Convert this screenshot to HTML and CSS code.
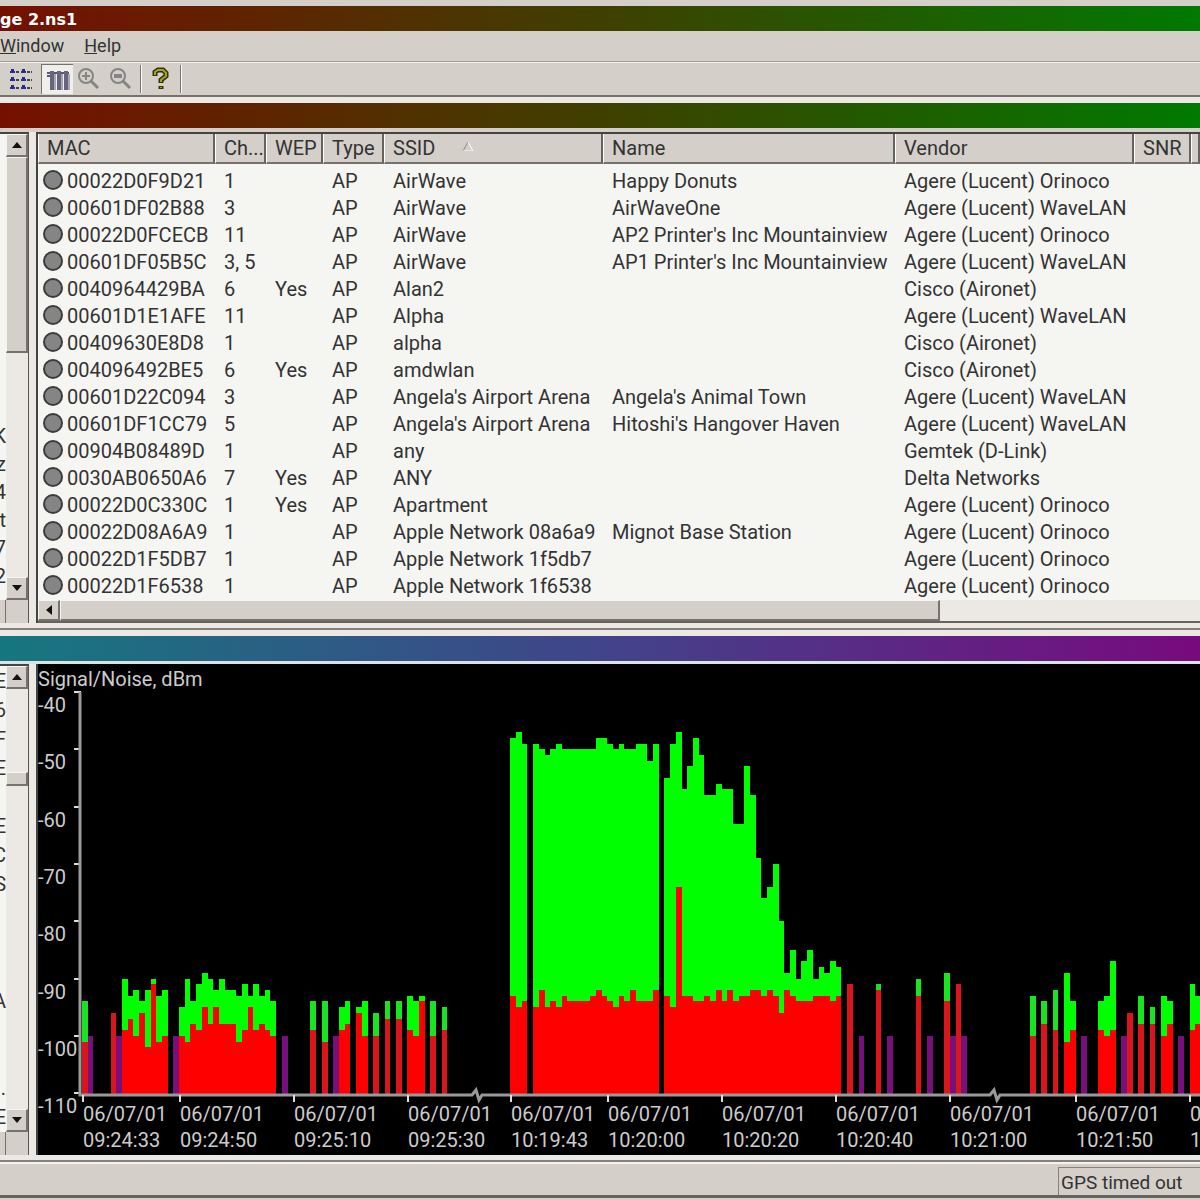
FILE: index.html
```html
<!DOCTYPE html>
<html lang="en">
<head>
    <meta charset="UTF-8">
    <meta name="viewport" content="width=device-width, initial-scale=1.0">
    <title>Network Stumbler</title>
    <link rel="stylesheet" href="styles.css">
</head>
<body>
    <header class="title-bar"><h1>ge 2.ns1</h1></header>

    <nav class="menu">
        <button><u>W</u>indow</button>
        <button><u>H</u>elp</button>
    </nav>

    <div class="toolbar">
        <button class="tool" aria-label="List">
            <svg width="24" height="24" viewBox="0 0 24 24">
                <g fill="#2a2a8c">
                    <path d="M2 2h3v2h1v2H1V4h1zM13 2h3v2h1v2h-5V4h1zM2 10h3v2h1v2H1v-2h1zM13 10h3v2h1v2h-5v-2h1zM2 18h3v2h1v2H1v-2h1zM13 18h3v2h1v2h-5v-2h1z"/>
                </g>
                <path d="M7 5h4M18 5h5M7 13h4M18 13h5M7 21h4M18 21h5" stroke="#444" stroke-width="2" stroke-dasharray="3 1"/>
            </svg>
        </button>
        <button class="tool pressed" aria-label="Details">
            <svg width="24" height="24" viewBox="0 0 24 24">
                <path d="M1 5h22M1 8h5" stroke="#555580" stroke-width="2"/>
                <path d="M6 3v19M13 3v19M20 3v19" stroke="#666678" stroke-width="4"/>
                <path d="M9 6v16M16 6v16M23 6v16" stroke="#a4a4bc" stroke-width="2"/>
            </svg>
        </button>
        <button class="tool" aria-label="Zoom in">
            <svg width="24" height="24" viewBox="0 0 24 24" fill="none" stroke="#858585" stroke-width="2">
                <circle cx="9" cy="9" r="7"/>
                <path d="M5 9h8M9 5v8"/>
                <path d="M14 14l7 7" stroke-width="3"/>
            </svg>
        </button>
        <button class="tool" aria-label="Zoom out">
            <svg width="24" height="24" viewBox="0 0 24 24" fill="none" stroke="#858585" stroke-width="2">
                <circle cx="9" cy="9" r="7"/>
                <path d="M5 8h8M5 10h8"/>
                <path d="M14 14l7 7" stroke-width="3"/>
            </svg>
        </button>
        <span class="separator"></span>
        <button class="tool" aria-label="Help">
            <svg width="24" height="24" viewBox="0 0 24 24" fill="none">
                <path d="M6 9V5l3-2h5l3 3v3l-5 4v3M12 19v3" stroke="#33330a" stroke-width="5"/>
                <path d="M6 8V5l3-2h5l3 3v3l-5 4v2M12 20v1" stroke="#a3a61c" stroke-width="2"/>
            </svg>
        </button>
        <span class="separator"></span>
    </div>

    <div class="caption warm"></div>

    <section class="pane">
        <aside class="tree">
            <div class="tree-items bottom">
                <span>K</span><span>z</span><span>4</span><span>t</span><span>7</span><span>2</span>
            </div>
            <div class="scroll-v">
                <button class="arrow" aria-label="Scroll up"><svg width="10" height="6"><path d="M0 6L5 0l5 6z"/></svg></button>
                <div class="thumb tall"></div>
                <button class="arrow end" aria-label="Scroll down"><svg width="10" height="6"><path d="M0 0l5 6 5-6z"/></svg></button>
            </div>
            <div class="corner"></div>
        </aside>
        <div class="list">
            <table>
                <colgroup>
                    <col class="c-mac"><col class="c-ch"><col class="c-wep"><col class="c-type">
                    <col class="c-ssid"><col class="c-name"><col class="c-vendor"><col class="c-snr"><col>
                </colgroup>
                <thead>
                    <tr>
                        <th>MAC</th><th>Ch...</th><th>WEP</th><th>Type</th>
                        <th>SSID <svg class="sort" width="12" height="10"><path d="M1 10L6 1" stroke="#888"/><path d="M6 1l5 9H1" stroke="#fff" fill="none"/></svg></th>
                        <th>Name</th><th>Vendor</th><th>SNR</th><th></th>
                    </tr>
                </thead>
                <tbody id="rows"></tbody>
            </table>
            <div class="scroll-h">
                <button class="arrow" aria-label="Scroll left"><svg width="6" height="10"><path d="M6 0v10L0 5z"/></svg></button>
                <div class="thumb"></div>
            </div>
        </div>
    </section>

    <div class="caption cool"></div>

    <section class="pane">
        <aside class="tree">
            <div class="tree-items">
                <span>E</span><span>6</span><span>F</span><span>E</span><span></span><span>E</span><span>C</span><span>S</span>
                <span></span><span></span><span></span><span>A</span><span></span><span></span><span>1.</span><span>E</span>
            </div>
            <div class="scroll-v">
                <button class="arrow" aria-label="Scroll up"><svg width="10" height="6"><path d="M0 6L5 0l5 6z"/></svg></button>
                <div class="thumb small"></div>
                <button class="arrow end" aria-label="Scroll down"><svg width="10" height="6"><path d="M0 0l5 6 5-6z"/></svg></button>
            </div>
            <div class="corner"></div>
        </aside>
        <div class="graph">
            <svg id="chart" width="100%" height="491" role="img" aria-label="Signal and noise over time"></svg>
        </div>
    </section>

    <footer class="status">
        <span class="gps">GPS timed out</span>
    </footer>

    <script src="app.js"></script>
</body>
</html>
```

FILE: styles.css
```css
* {
    box-sizing: border-box;
}
body {
    margin: 0;
    padding-top: 6px;
    background: #d4d0c9;
    color: #333;
    font-family: "Comic Sans MS", Roboto, sans-serif;
    font-size: 20px;
    overflow-x: hidden;
}
button {
    font: inherit;
    color: inherit;
    background: none;
    border: none;
    padding: 0;
}

/* title, menu and toolbar */
.title-bar, .caption.warm {
    height: 25px;
    background: linear-gradient(to right, #751000, #3f4000 50%, #007a00);
}
.title-bar h1 {
    margin: 0;
    color: #fff;
    font: bold 16px/27px "DejaVu Sans", sans-serif;
}
.menu {
    display: flex;
    gap: 20px;
    height: 31px;
    padding-bottom: 2px;
    border-bottom: 1px solid #a09c94;
    font-size: 18px;
}
.toolbar {
    display: flex;
    align-items: center;
    height: 35px;
    padding-left: 5px;
    border-top: 1px solid #f4f2ee;
    border-bottom: 2px solid #77736c;
}
.tool {
    display: flex;
    align-items: center;
    justify-content: center;
    width: 32px;
    height: 30px;
}
.tool.pressed {
    margin-left: 4px;
    background: #f1efec;
    border-top: 1px solid #77736c;
    border-left: 1px solid #77736c;
}
.separator {
    width: 2px;
    height: 28px;
    margin: 0 3px;
    border-left: 1px solid #77736c;
    border-right: 1px solid #fff;
}

.caption {
    box-sizing: content-box;
    height: 25px;
    border-top: 6px solid #ece9e4;
    border-bottom: 4px solid #d4d0c9;
}
.caption.cool {
    border-bottom-width: 3px;
    border-bottom-color: #d8e4e4;
    background: linear-gradient(to right, #16777f, #41448a 50%, #780a7e);
}

/* panes */
.pane {
    display: flex;
    border-bottom: 2px solid #85817a;
    background: #ece9e4;
    padding-bottom: 5px;
}
.tree {
    display: grid;
    grid-template-columns: 6px 22px;
    grid-template-rows: 1fr 23px;
    width: 29px;
    margin-right: 7px;
    border-top: 2px solid #444;
    border-right: 1px solid #555;
    background: #f5f5f2;
}
.tree-items {
    display: grid;
    grid-template-columns: minmax(0, 1fr);
    grid-auto-rows: 1fr;
    overflow: hidden;
}
.tree-items span {
    display: flex;
    align-items: center;
    justify-content: flex-end;
    min-height: 28px;
}
.tree-items.bottom {
    grid-auto-rows: 28px;
    align-content: end;
    padding-bottom: 10px;
}
.scroll-v {
    display: flex;
    flex-direction: column;
    background: #ece9e4;
}
.scroll-h {
    display: flex;
    height: 23px;
    background: #ece9e4;
    border-bottom: 2px solid #66625c;
}
.arrow, .thumb {
    background: #d4d0c9;
    border: 1px solid #f6f4f0;
    border-right: 2px solid #77736c;
    border-bottom: 2px solid #77736c;
}
.arrow {
    display: flex;
    align-items: center;
    justify-content: center;
    width: 22px;
    height: 23px;
}
.scroll-h .arrow {
    height: 21px;
}
.arrow.end {
    margin-top: auto;
}
.arrow svg {
    fill: #111;
}
.thumb.tall {
    height: 42%;
}
.thumb.small {
    height: 14px;
    margin-top: 83px;
}
.scroll-h .thumb {
    width: 880px;
}
.corner {
    grid-column: 1 / 3;
    border-left: 5px solid #d4d0c9;
    background: #d4d0c9;
    box-shadow: inset 1px 0 #77736c;
}

/* access point list */
.list {
    flex: 1;
    min-width: 0;
    overflow: hidden;
    background: #f5f5f2;
    border-top: 2px solid #444;
    border-left: 2px solid #444;
}
table {
    width: 100%;
    table-layout: fixed;
    border-collapse: separate;
    border-spacing: 0;
}
.c-mac { width: 177px; }
.c-ch { width: 51px; }
.c-wep { width: 57px; }
.c-type { width: 61px; }
.c-ssid { width: 219px; }
.c-name { width: 292px; }
.c-vendor { width: 239px; }
.c-snr { width: 57px; }
th {
    height: 30px;
    padding: 0 0 0 8px;
    background: #d4d0c9;
    border-left: 1px solid #fff;
    border-right: 2px solid #66625c;
    border-bottom: 2px solid #77736c;
    font-weight: normal;
    text-align: left;
    white-space: nowrap;
}
.sort {
    margin-left: 22px;
    vertical-align: 4px;
}
td {
    height: 27px;
    padding: 0 0 0 9px;
    line-height: 27px;
    white-space: nowrap;
}
td:first-child {
    padding-left: 5px;
}
tbody tr:first-child td {
    height: 31px;
    padding-top: 4px;
}
.dot {
    display: inline-block;
    width: 20px;
    height: 20px;
    margin-right: 4px;
    border: 2px solid #3c3c3c;
    border-radius: 50%;
    background: #858585;
    vertical-align: -2px;
}

/* signal graph */
.graph {
    flex: 1;
    min-width: 0;
    background: #000;
    border-left: 2px solid #444;
}
.graph svg {
    display: block;
}
.graph text {
    fill: #ccc;
}
.axis {
    fill: none;
    stroke: #999;
    stroke-width: 3;
}
.tick {
    stroke: #ddd;
    stroke-width: 2;
}
.signal { fill: #00ff00; }
.noise { fill: #ff0000; }
.signal.single { fill: #18e420; }
.noise.single { fill: #d8161c; }
.lost { fill: #78107c; }

.status {
    display: flex;
    justify-content: flex-end;
    height: 36px;
    padding-top: 3px;
    border-top: 2px solid #f4f2ee;
    border-bottom: 3px solid #66625c;
    font-size: 19px;
}
.gps {
    width: 142px;
    padding-left: 2px;
    border-top: 1px solid #85817a;
    border-left: 1px solid #85817a;
    line-height: 29px;
}
```

FILE: app.js
```js
const points = [
    ['00022D0F9D21', '1', '', 'AirWave', 'Happy Donuts', 'Agere (Lucent) Orinoco'],
    ['00601DF02B88', '3', '', 'AirWave', 'AirWaveOne', 'Agere (Lucent) WaveLAN'],
    ['00022D0FCECB', '11', '', 'AirWave', "AP2 Printer's Inc Mountainview", 'Agere (Lucent) Orinoco'],
    ['00601DF05B5C', '3, 5', '', 'AirWave', "AP1 Printer's Inc Mountainview", 'Agere (Lucent) WaveLAN'],
    ['0040964429BA', '6', 'Yes', 'Alan2', '', 'Cisco (Aironet)'],
    ['00601D1E1AFE', '11', '', 'Alpha', '', 'Agere (Lucent) WaveLAN'],
    ['00409630E8D8', '1', '', 'alpha', '', 'Cisco (Aironet)'],
    ['004096492BE5', '6', 'Yes', 'amdwlan', '', 'Cisco (Aironet)'],
    ['00601D22C094', '3', '', "Angela's Airport Arena", "Angela's Animal Town", 'Agere (Lucent) WaveLAN'],
    ['00601DF1CC79', '5', '', "Angela's Airport Arena", "Hitoshi's Hangover Haven", 'Agere (Lucent) WaveLAN'],
    ['00904B08489D', '1', '', 'any', '', 'Gemtek (D-Link)'],
    ['0030AB0650A6', '7', 'Yes', 'ANY', '', 'Delta Networks'],
    ['00022D0C330C', '1', 'Yes', 'Apartment', '', 'Agere (Lucent) Orinoco'],
    ['00022D08A6A9', '1', '', 'Apple Network 08a6a9', 'Mignot Base Station', 'Agere (Lucent) Orinoco'],
    ['00022D1F5DB7', '1', '', 'Apple Network 1f5db7', '', 'Agere (Lucent) Orinoco'],
    ['00022D1F6538', '1', '', 'Apple Network 1f6538', '', 'Agere (Lucent) Orinoco']
];

document.getElementById('rows').innerHTML = points.map(([mac, ch, wep, ssid, name, vendor]) =>
    `<tr><td><span class="dot"></span>${mac}</td><td>${ch}</td><td>${wep}</td><td>AP</td>` +
    `<td>${ssid}</td><td>${name}</td><td>${vendor}</td><td></td><td></td></tr>`
).join('');

// runs of samples: first slot, then [signal, noise] in -dBm for each second
const runs = [
    [0, [94, 101]],
    [5, [96, 96]],
    [7, [90, 99], [93, 97], [92, 100], [94, 96], [92, 102], [90, 91], [93, 101], [92, 100]],
    [17, [95, 100], [90, 101], [94, 98], [91, 99], [89, 95], [90, 98], [92, 95], [90, 98], [92, 98],
        [92, 98], [93, 101], [91, 99], [93, 95], [91, 99], [93, 98], [92, 99], [94, 100]],
    [40, [94, 99]],
    [42, [94, 101]],
    [45, [95, 99], [94, 98]],
    [48, [95, 96], [94, 100]],
    [51, [96, 100]],
    [53, [94, 97]],
    [55, [94, 97]],
    [57, [93, 99], [94, 100], [93, 94]],
    [61, [94, 100]],
    [63, [95, 99]],
    [75, [48, 93], [47, 95], [49, 94]],
    [79, [49, 95], [50, 92], [51, 95], [50, 94], [49, 95], [50, 93], [50, 94], [50, 94], [50, 94],
        [50, 94], [50, 93], [48, 92], [48, 93], [49, 94], [50, 95], [49, 93], [50, 94], [50, 92],
        [49, 94], [49, 94], [52, 94], [49, 92]],
    [102, [55, 93], [49, 95], [47, 74], [57, 93], [53, 93], [48, 94], [51, 94], [58, 93], [58, 94],
        [56, 92], [57, 94], [57, 92], [63, 94], [63, 93], [53, 93], [58, 92], [69, 92], [76, 93],
        [74, 92], [70, 93], [80, 96], [89, 92], [85, 93], [90, 94], [87, 94], [85, 94], [90, 93],
        [88, 93], [89, 93], [87, 94], [88, 93]],
    [134, [91, 91]],
    [139, [91, 92]],
    [146, [90, 93]],
    [151, [89, 94]],
    [153, [91, 91]],
    [166, [93, 100]],
    [168, [94, 98]],
    [170, [92, 99]],
    [172, [89, 101], [94, 99]],
    [178, [94, 99], [93, 100], [87, 99]],
    [183, [96, 96]],
    [185, [93, 98]],
    [187, [95, 98]],
    [189, [93, 100], [94, 98]],
    [194, [91, 99], [93, 98]]
];
const lost = [1, 6, 16, 35, 44, 136, 141, 148, 152, 154, 175, 182, 192];

const times = [
    [45, '06/07/01', '09:24:33'], [142, '06/07/01', '09:24:50'], [256, '06/07/01', '09:25:10'],
    [370, '06/07/01', '09:25:30'], [473, '06/07/01', '10:19:43'], [570, '06/07/01', '10:20:00'],
    [684, '06/07/01', '10:20:20'], [798, '06/07/01', '10:20:40'], [912, '06/07/01', '10:21:00'],
    [1038, '06/07/01', '10:21:50'], [1152, '06/07/01', '10:22:10']
];

const base = 430;
const slotX = i => Math.round(44 + i * 5.71);
const levelY = db => Math.round(28 + (db - 40) * 5.73);
const bar = (cls, i, top, bottom) =>
    `<rect class="${cls}" x="${slotX(i)}" y="${top}" width="${slotX(i + 1) - slotX(i)}" height="${bottom - top}"/>`;

let out = '<text x="0" y="22">Signal/Noise, dBm</text>';

lost.forEach(i => out += bar('lost', i, levelY(100), base));
runs.forEach(([start, ...samples]) => {
    const single = samples.length === 1 ? ' single' : '';
    samples.forEach(([signal, noise], n) => {
        out += bar('signal' + single, start + n, levelY(signal), levelY(noise));
        out += bar('noise' + single, start + n, levelY(noise), base);
    });
});

for (let db = 40; db <= 110; db += 10) {
    out += `<path class="tick" d="M36 ${levelY(db)}h7"/>`;
    out += `<text x="0" y="${levelY(db) + 20}">-${db}</text>`;
}

// time axis with a break wherever the log has a gap
out += `<path class="axis" d="M42 28V431H434l4 -5l3 10l3 -5H952l4 -5l3 10l3 -5H2400"/>`;

times.forEach(([x, date, time]) => {
    out += `<path class="tick" d="M${x} 431v7"/>`;
    out += `<text x="${x}" y="457">${date}</text><text x="${x}" y="483">${time}</text>`;
});

document.getElementById('chart').innerHTML = out;
```
